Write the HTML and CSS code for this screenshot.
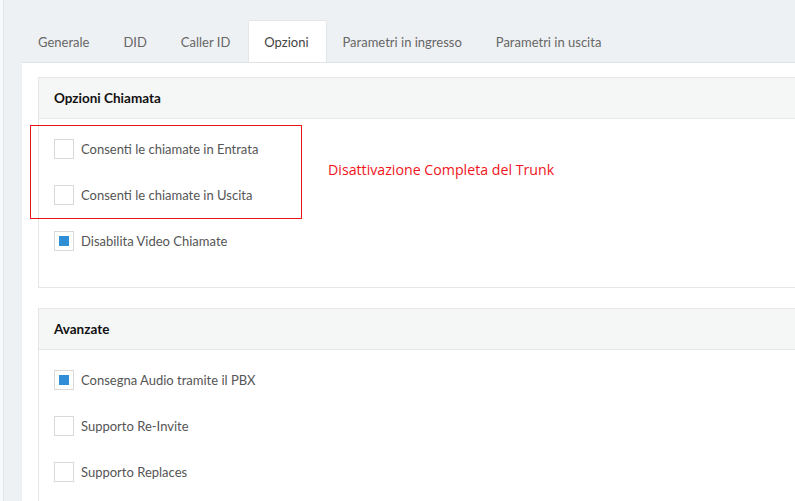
FILE: index.html
```html
<!DOCTYPE html>
<html lang="it">
<head>
<meta charset="utf-8">
<title>Opzioni Trunk</title>
<link rel="stylesheet" href="styles.css">
</head>
<body>
<div class="page">
  <div class="edge"></div>
  <div class="main">
    <ul class="tabs">
      <li class="tab">Generale</li>
      <li class="tab">DID</li>
      <li class="tab">Caller ID</li>
      <li class="tab active">Opzioni</li>
      <li class="tab">Parametri in ingresso</li>
      <li class="tab">Parametri in uscita</li>
    </ul>
    <div class="tab-panel">
      <section class="card">
        <header class="card-head">Opzioni Chiamata</header>
        <div class="card-body">
          <label class="row"><span class="check"></span><span class="lbl">Consenti le chiamate in Entrata</span></label>
          <label class="row"><span class="check"></span><span class="lbl">Consenti le chiamate in Uscita</span></label>
          <label class="row"><span class="check on"></span><span class="lbl">Disabilita Video Chiamate</span></label>
          <div class="redbox"></div>
          <div class="note">Disattivazione Completa del Trunk</div>
        </div>
      </section>
      <section class="card">
        <header class="card-head">Avanzate</header>
        <div class="card-body">
          <label class="row"><span class="check on"></span><span class="lbl">Consegna Audio tramite il PBX</span></label>
          <label class="row"><span class="check"></span><span class="lbl">Supporto Re-Invite</span></label>
          <label class="row"><span class="check"></span><span class="lbl">Supporto Replaces</span></label>
        </div>
      </section>
    </div>
  </div>
</div>
</body>
</html>
```
FILE: styles.css
```css
html, body {
  margin: 0;
  padding: 0;
}
body {
  width: 795px;
  height: 501px;
  overflow: hidden;
  background: #eef1f3;
  font-family: "Source Sans Pro", Lato, "Noto Sans", sans-serif;
  font-size: 13px;
  color: #555;
}
.page {
  display: flex;
  height: 501px;
}
.edge {
  width: 3px;
  flex: none;
  background: #f6f8f9;
  border-right: 1px solid #e3e7ea;
}
.main {
  flex: 1;
  padding: 20px 0 0 18px;
  min-width: 0;
}
.tabs {
  list-style: none;
  margin: 0;
  padding: 0;
  display: flex;
  height: 42px;
}
.tab {
  padding: 0 17px 0 15px;
  line-height: 42px;
  font-size: 13px;
  color: #666;
  border: 1px solid transparent;
  border-bottom: none;
  border-radius: 2px 2px 0 0;
}
.tab.active {
  background: #fff;
  border-color: #e4e7ea;
  color: #444;
}
.tab-panel {
  background: #fff;
  border-top: 1px solid #e1e4e7;
  padding: 14px 0 20px 16px;
  min-height: 420px;
}
.card {
  border: 1px solid #e6e6e6;
  border-right: none;
  margin-bottom: 20px;
}
.card-head {
  background: #f5f6f6;
  border-bottom: 1px solid #e8e8e8;
  height: 40px;
  line-height: 40px;
  padding-left: 15px;
  font-weight: bold;
  font-size: 13.5px;
  color: #111;
}
.card-body {
  position: relative;
  padding: 7px 0 23px 15px;
}
.row {
  display: flex;
  align-items: center;
  height: 46px;
}
.check {
  width: 18px;
  height: 18px;
  border: 1px solid #d9d9d9;
  background: #fff;
  margin-right: 7px;
  display: flex;
  align-items: center;
  justify-content: center;
  flex: none;
}
.check.on::after {
  content: "";
  width: 10px;
  height: 10px;
  background: #2f8ed6;
}
.lbl {
  font-size: 13px;
  color: #555;
}
.redbox {
  position: absolute;
  left: -9px;
  top: 6px;
  width: 270px;
  height: 92px;
  border: 1px solid #e8141b;
}
.note {
  position: absolute;
  left: 289px;
  top: 41px;
  color: #f0141c;
  font-family: "Open Sans", "Noto Sans", sans-serif;
  font-size: 14.2px;
}
```
